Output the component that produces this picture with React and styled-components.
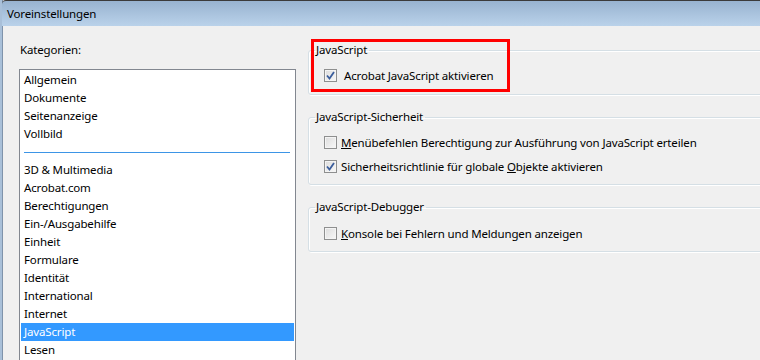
import React from "react";
import styled, { createGlobalStyle } from "styled-components";

const GlobalStyle = createGlobalStyle`
  html, body {
    margin: 0;
    padding: 0;
    background: #f0f0f0;
  }
  body {
    font-family: "Segoe UI", "Noto Sans", "Liberation Sans", sans-serif;
    font-size: 11.5px;
    letter-spacing: -0.15px;
    color: #000;
  }
`;

const categoriesTop = ["Allgemein", "Dokumente", "Seitenanzeige", "Vollbild"];
const categoriesBottom = [
  "3D & Multimedia",
  "Acrobat.com",
  "Berechtigungen",
  "Ein-/Ausgabehilfe",
  "Einheit",
  "Formulare",
  "Identität",
  "International",
  "Internet",
  "JavaScript",
  "Lesen",
];

export default function App() {
  return (
    <>
      <GlobalStyle />
      <Window>
        <TitleBar>Voreinstellungen</TitleBar>
        <Body>
          <LeftColumn>
            <Caption>Kategorien:</Caption>
            <ListBox>
              {categoriesTop.map((c) => (
                <ListItem key={c}>{c}</ListItem>
              ))}
              <Separator />
              {categoriesBottom.map((c) => (
                <ListItem key={c} $selected={c === "JavaScript"}>
                  {c}
                </ListItem>
              ))}
            </ListBox>
          </LeftColumn>
          <RightColumn>
            <Group>
              <Legend>JavaScript</Legend>
              <GroupRows $pt={8} $pb={10}>
                <CheckRow>
                  <CheckBox checked />
                  <CheckLabel $gap={7}>
                    Acrobat <u>J</u>avaScript aktivieren
                  </CheckLabel>
                </CheckRow>
              </GroupRows>
            </Group>
            <Group $top={14}>
              <Legend>JavaScript-Sicherheit</Legend>
              <GroupRows $pt={8} $pb={9}>
                <CheckRow>
                  <CheckBox />
                  <CheckLabel>
                    <u>M</u>enübefehlen Berechtigung zur Ausführung von JavaScript erteilen
                  </CheckLabel>
                </CheckRow>
                <CheckRow>
                  <CheckBox checked />
                  <CheckLabel>
                    Sicherheitsrichtlinie für globale <u>O</u>bjekte aktivieren
                  </CheckLabel>
                </CheckRow>
              </GroupRows>
            </Group>
            <Group $top={14}>
              <Legend>JavaScript-Debugger</Legend>
              <GroupRows $pt={9} $pb={9}>
                <CheckRow>
                  <CheckBox />
                  <CheckLabel>
                    <u>K</u>onsole bei Fehlern und Meldungen anzeigen
                  </CheckLabel>
                </CheckRow>
              </GroupRows>
            </Group>
            <Highlight />
          </RightColumn>
        </Body>
      </Window>
    </>
  );
}

function CheckBox({ checked }) {
  return (
    <Box>
      {checked && (
        <svg width="9" height="9" viewBox="0 0 9 9">
          <path
            d="M1 4.5 L3.5 7.5 L8 1"
            fill="none"
            stroke="#3a5d9c"
            strokeWidth="1.8"
          />
        </svg>
      )}
    </Box>
  );
}

const Window = styled.div`
  width: 760px;
  height: 360px;
  overflow: hidden;
  display: flex;
  flex-direction: column;
  background: #f0f0f0;
  border-left: 2px solid #a9c0d9;
  box-shadow: inset 1px 0 0 #7f93ab;
  box-sizing: border-box;
`;

const TitleBar = styled.div`
  height: 25px;
  flex: none;
  border-top: 1px solid #3b3b3b;
  border-top-left-radius: 4px;
  background: linear-gradient(#98b3d0, #bad2ea);
  padding-left: 5px;
  line-height: 25px;
  display: flex;
  align-items: center;
`;

const Body = styled.div`
  flex: 1;
  display: flex;
  padding: 16px 0 0 17px;
  gap: 12px;
`;

const LeftColumn = styled.div`
  width: 277px;
  flex: none;
  display: flex;
  flex-direction: column;
`;

const Caption = styled.div`
  line-height: 16px;
  margin: 0 0 11px 1px;
`;

const ListBox = styled.div`
  flex: 1;
  background: #fff;
  border: 1px solid #828790;
  border-bottom: none;
  padding: 1px 1px 0;
  display: flex;
  flex-direction: column;
`;

const ListItem = styled.div`
  height: 18px;
  line-height: 18px;
  padding-left: 3px;
  white-space: nowrap;
  background: ${(p) => (p.$selected ? "#3399ff" : "transparent")};
  color: ${(p) => (p.$selected ? "#fff" : "#000")};
`;

const Separator = styled.div`
  height: 18px;
  display: flex;
  align-items: center;
  padding: 0 4px 0 3px;

  &::after {
    content: "";
    flex: 1;
    height: 1px;
    background: #3d95e6;
  }
`;

const RightColumn = styled.div`
  position: relative;
  width: 480px;
  flex: none;
  display: flex;
  flex-direction: column;
`;

const Group = styled.fieldset`
  margin: ${(p) => p.$top || 0}px 0 0;
  padding: 0 0 0 15px;
  border: 1px solid #d5dfe5;
  border-radius: 3px;
  box-shadow: inset 1px 1px 0 #fff, 1px 1px 0 #fff;
  min-width: 0;
`;

const Legend = styled.legend`
  margin-left: -9px;
  padding: 0 2px 0 1px;
  line-height: 16px;
`;

const GroupRows = styled.div`
  display: flex;
  flex-direction: column;
  gap: 6px;
  padding: ${(p) => p.$pt}px 0 ${(p) => p.$pb}px;
`;

const CheckRow = styled.label`
  height: 18px;
  display: flex;
  align-items: center;
  white-space: nowrap;
`;

const Box = styled.span`
  width: 11px;
  height: 11px;
  flex: none;
  border: 1px solid #8e8f8f;
  background: linear-gradient(135deg, #dcdcdc, #f8f8f8);
  box-shadow: inset 0 0 0 1px #f4f4f4;
  display: flex;
  align-items: center;
  justify-content: center;
`;

const CheckLabel = styled.span`
  margin-left: ${(p) => p.$gap || 4}px;
`;

const Highlight = styled.div`
  position: absolute;
  left: 3px;
  top: -3px;
  width: 193px;
  height: 47px;
  border: 3px solid #ff0000;
  pointer-events: none;
`;
